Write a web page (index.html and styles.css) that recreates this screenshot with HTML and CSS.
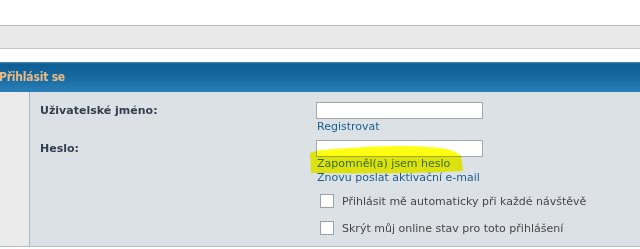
FILE: index.html
```html
<!DOCTYPE html>
<html lang="cs">
<head>
<meta charset="utf-8">
<link rel="stylesheet" href="styles.css">
</head>
<body>
<div class="top"></div>
<div class="navband"></div>
<div class="gap"></div>
<div class="header"><span class="title">Přihlásit se</span></div>
<div class="panel">
  <div class="side"></div>
  <div class="main">
    <div class="row row-user">
      <label class="label">Uživatelské jméno:</label>
      <div class="field">
        <input class="text-input" type="text">
        <a class="link" href="#">Registrovat</a>
      </div>
    </div>
    <div class="row row-pass">
      <label class="label">Heslo:</label>
      <div class="field">
        <input class="text-input" type="password">
        <a class="link link-forgot" href="#">Zapomněl(a) jsem heslo</a>
        <a class="link" href="#">Znovu poslat aktivační e-mail</a>
        <svg class="marker" width="170" height="30" viewBox="0 0 170 30" aria-hidden="true">
          <path d="M0 8 C 8 5, 20 4, 40 3 C 65 1, 95 0, 120 2 C 138 3, 146 6, 151 11 L 153 26 C 120 28, 60 29, 1 28 Z" fill="#ffff14"/>
        </svg>
      </div>
    </div>
    <div class="checks">
      <label class="check"><span class="box"></span><span>Přihlásit mě automaticky při každé návštěvě</span></label>
      <label class="check"><span class="box"></span><span>Skrýt můj online stav pro toto přihlášení</span></label>
    </div>
  </div>
</div>
</body>
</html>
```

FILE: styles.css
```css
* { box-sizing: border-box; }
html, body { margin: 0; padding: 0; background: #ffffff; }
body { width: 640px; height: 249px; overflow: hidden; font-family: "DejaVu Sans", Verdana, sans-serif; }

.top { height: 25px; background: #ffffff; }
.navband { height: 24px; background: #e9e9e9; border-top: 1px solid #b7bbbf; border-bottom: 1px solid #c3c6c9; }
.gap { height: 13px; background: #fdfdfd; }

.header {
  height: 30px;
  display: flex;
  align-items: center;
  background: linear-gradient(to bottom, #5b8db2 0, #0d5e95 2px, #15699f 50%, #2a80b8 100%);
}
.title {
  margin-left: -1px;
  font-family: "DejaVu Sans Condensed", "DejaVu Sans", sans-serif;
  font-weight: bold;
  font-size: 12px;
  color: #ecba86;
  letter-spacing: -0.2px;
}

.panel {
  display: flex;
  height: 155px;
  border-bottom: 1px solid #b2bfca;
}
.side {
  width: 30px;
  background: #ebebeb;
  border-right: 1px solid #abb7c2;
}
.main {
  flex: 1;
  background: #dce1e5;
  padding-top: 10px;
}

.row { display: grid; grid-template-columns: 276px 1fr; padding-left: 10px; }
.row-user { height: 38px; }
.row-pass { height: 54px; }
.label {
  font-size: 11px;
  font-weight: bold;
  color: #323d4f;
  padding-top: 2px;
}
.field { display: flex; flex-direction: column; align-items: flex-start; position: relative; }
.text-input {
  width: 167px;
  height: 17px;
  margin: 0;
  border: 1px solid #a4a8ac;
  background: #ffffff;
  position: relative;
  z-index: 2;
}
.link {
  font-size: 11px;
  line-height: 14px;
  color: #1b5e8f;
  text-decoration: none;
  margin-left: 1px;
  position: relative;
  z-index: 2;
}
.row-user .link { margin-top: 1px; }
.link-forgot { margin-top: 0; color: #3d6e4a; }
.marker {
  position: absolute;
  left: -6px;
  top: 5px;
  z-index: 3;
  mix-blend-mode: multiply;
}

.checks { padding-left: 290px; padding-top: 0; display: flex; flex-direction: column; gap: 13px; }
.check { display: flex; align-items: center; gap: 8px; font-size: 11px; color: #464646; }
.box {
  width: 14px;
  height: 14px;
  background: #ffffff;
  border: 1px solid #9da1a5;
}
```
